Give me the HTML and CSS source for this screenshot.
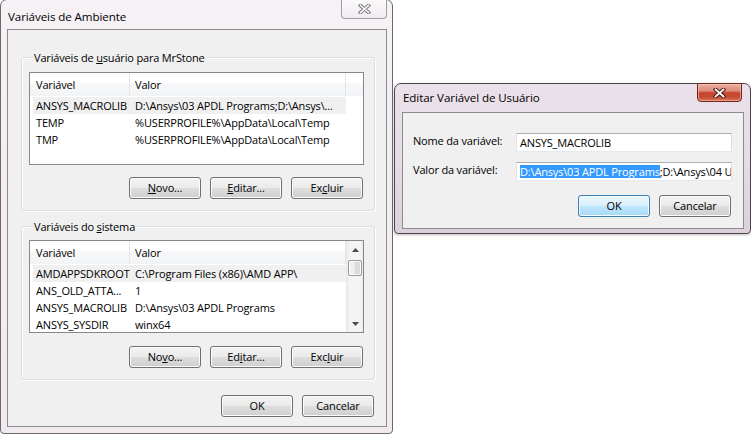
FILE: index.html
```html
<!DOCTYPE html>
<html lang="pt">
<head>
<meta charset="utf-8">
<title>Variáveis de Ambiente</title>
<link rel="stylesheet" href="styles.css">
</head>
<body>
<div class="desktop">

  <div class="win win-main">
    <div class="titlebar">
      <span class="title">Variáveis de Ambiente</span>
      <span class="close close-inactive">
        <svg width="13" height="10" viewBox="0 0 13 10"><path d="M2.5 1.5 L10.5 8.5 M10.5 1.5 L2.5 8.5" stroke="#7c7c7c" stroke-width="3.6" stroke-linecap="square" fill="none"/><path d="M2.5 1.5 L10.5 8.5 M10.5 1.5 L2.5 8.5" stroke="#fbfbfb" stroke-width="1.6" stroke-linecap="square" fill="none"/></svg>
      </span>
    </div>
    <div class="client">
      <div class="group g1">
        <span class="glabel">Variáveis de <u>u</u>suário para MrStone</span>
        <div class="list">
          <div class="lmain">
            <div class="lhead"><span class="hc hc1">Variável</span><span class="hc hc2">Valor</span><span class="hc hc3"></span></div>
            <div class="rows">
              <div class="row sel"><span class="c1">ANSYS_MACROLIB</span><span class="c2">D:\Ansys\03 APDL Programs;D:\Ansys\...</span></div>
              <div class="row"><span class="c1">TEMP</span><span class="c2">%USERPROFILE%\AppData\Local\Temp</span></div>
              <div class="row"><span class="c1">TMP</span><span class="c2">%USERPROFILE%\AppData\Local\Temp</span></div>
            </div>
          </div>
        </div>
        <div class="btnrow">
          <span class="btn"><u>N</u>ovo...</span>
          <span class="btn"><u>E</u>ditar...</span>
          <span class="btn">Ex<u>c</u>luir</span>
        </div>
      </div>

      <div class="group g2">
        <span class="glabel">Variáveis do <u>s</u>istema</span>
        <div class="list">
          <div class="lmain">
            <div class="lhead"><span class="hc hc1">Variável</span><span class="hc hc2">Valor</span></div>
            <div class="rows">
              <div class="row sel"><span class="c1">AMDAPPSDKROOT</span><span class="c2">C:\Program Files (x86)\AMD APP\</span></div>
              <div class="row"><span class="c1">ANS_OLD_ATTA...</span><span class="c2">1</span></div>
              <div class="row"><span class="c1">ANSYS_MACROLIB</span><span class="c2">D:\Ansys\03 APDL Programs</span></div>
              <div class="row"><span class="c1">ANSYS_SYSDIR</span><span class="c2">winx64</span></div>
            </div>
          </div>
          <div class="vscroll">
            <span class="sbtn"><svg width="7" height="4" viewBox="0 0 7 4"><path d="M0 4 L3.5 0 L7 4 Z" fill="#4a4a4a"/></svg></span>
            <span class="thumb"></span>
            <span class="track"></span>
            <span class="sbtn"><svg width="7" height="4" viewBox="0 0 7 4"><path d="M0 0 L7 0 L3.5 4 Z" fill="#4a4a4a"/></svg></span>
          </div>
        </div>
        <div class="btnrow">
          <span class="btn">No<u>v</u>o...</span>
          <span class="btn">Ed<u>i</u>tar...</span>
          <span class="btn">Exc<u>l</u>uir</span>
        </div>
      </div>

      <div class="btnrow okrow">
        <span class="btn">OK</span>
        <span class="btn">Cancelar</span>
      </div>
    </div>
  </div>

  <div class="win win-edit">
    <div class="titlebar">
      <span class="title">Editar Variável de Usuário</span>
      <span class="close close-active">
        <svg width="13" height="10" viewBox="0 0 13 10"><path d="M2.5 1.5 L10.5 8.5 M10.5 1.5 L2.5 8.5" stroke="#4a1c14" stroke-width="3.8" stroke-linecap="square" fill="none"/><path d="M2.5 1.5 L10.5 8.5 M10.5 1.5 L2.5 8.5" stroke="#ffffff" stroke-width="1.8" stroke-linecap="square" fill="none"/></svg>
      </span>
    </div>
    <div class="client client-edit">
      <div class="field">
        <span class="flabel">Nome da variável:</span>
        <span class="input">ANSYS_MACROLIB</span>
      </div>
      <div class="field f2">
        <span class="flabel">Valor da variável:</span>
        <span class="input"><span class="selected">D:\Ansys\03 APDL Programs</span>;D:\Ansys\04 U</span>
      </div>
      <div class="btnrow editbtns">
        <span class="btn btn-default">OK</span>
        <span class="btn">Cancelar</span>
      </div>
    </div>
  </div>

</div>
</body>
</html>
```

FILE: styles.css
```css
* { box-sizing: border-box; }
html, body { margin: 0; padding: 0; }
body {
  width: 751px;
  height: 436px;
  overflow: hidden;
  background: #ffffff;
  font-family: "Open Sans", "Noto Sans", sans-serif;
  font-size: 11px;
  letter-spacing: -0.17px;
  color: #000;
}
u { text-decoration: underline; text-underline-offset: 1px; }

.desktop { position: relative; width: 751px; height: 436px; overflow: hidden; }

/* windows on the desktop */
.win {
  position: absolute;
  display: flex;
  flex-direction: column;
  border: 1px solid #6d676d;
  border-radius: 7px 7px 4px 4px;
}
.win-main {
  left: 0;
  top: -1px;
  width: 393px;
  height: 435px;
  padding: 0 5px 6px 6px;
  background: linear-gradient(180deg, #f6f1f5 0%, #f3eef2 40%, #f1ebf0 100%);
}
.win-edit {
  left: 394px;
  top: 83px;
  width: 357px;
  height: 151px;
  padding: 0 6px 4px 7px;
  border-color: #4b454b;
  background: linear-gradient(180deg, #ebe1ea 0%, #e6dbe6 50%, #ddd0dd 100%);
  box-shadow: 0 1px 3px rgba(0,0,0,0.25);
}

.titlebar {
  display: flex;
  justify-content: space-between;
  align-items: flex-start;
  flex: none;
}
.win-main .titlebar { height: 29px; }
.win-edit .titlebar { height: 28px; }
.title {
  font-size: 11.6px;
  letter-spacing: -0.1px;
  line-height: 16px;
  padding-left: 1px;
  white-space: nowrap;
}
.win-main .title { padding-top: 9px; }
.win-edit .title { padding-top: 6px; }

.close {
  display: flex;
  align-items: center;
  justify-content: center;
  height: 19px;
  border-radius: 0 0 4px 4px;
}
.close-inactive {
  width: 46px;
  margin-top: 0;
  border: 1px solid #a39ea5;
  border-top: none;
  background: linear-gradient(180deg, rgba(255,255,255,0.55), rgba(235,230,236,0.5));
}
.close-active {
  width: 45px;
  margin-top: -1px;
  margin-right: 2px;
  border: 1px solid #6b2a20;
  background: linear-gradient(180deg, #eab0a2 0%, #df8b78 40%, #c8452d 52%, #c54a33 75%, #d77458 100%);
  box-shadow: inset 0 0 0 1px rgba(255,210,200,0.5);
}

/* client area */
.client {
  flex: none;
  display: flex;
  flex-direction: column;
  background: #f0f0f0;
  border: 1px solid #8e8a8f;
}
.win-main .client {
  height: 398px;
  padding: 0 12px 9px 0;
}

/* group boxes */
.group {
  display: flex;
  flex-direction: column;
  border: 1px solid #d5dfe5;
  border-radius: 3px;
  box-shadow: inset 1px 1px 0 #fff, 1px 1px 0 #fff;
  margin-left: 13px;
  margin-right: -1px;
  padding: 0 10px 11px 7px;
}
.g1 { margin-top: 27px; }
.g2 { margin-top: 15px; }
.glabel {
  align-self: flex-start;
  height: 15px;
  line-height: 15px;
  margin-top: -8px;
  margin-left: 4px;
  padding: 0 2px 0 1px;
  background: #f0f0f0;
  white-space: nowrap;
}

/* list views */
.list {
  display: flex;
  height: 93px;
  margin-top: 7px;
  background: #fff;
  border: 1px solid #828790;
  overflow: hidden;
}
.g2 .list { margin-top: 6px; }
.lmain { flex: 1; display: flex; flex-direction: column; min-width: 0; }
.lhead {
  display: flex;
  height: 23px;
  flex: none;
  background: linear-gradient(180deg, #ffffff 0%, #ffffff 45%, #f7f8f9 45%, #f2f3f5 100%);
}
.hc {
  line-height: 23px;
  border-right: 1px solid #e3e4e6;
  white-space: nowrap;
}
.hc1 { width: 100px; padding-left: 6px; }
.hc2 { width: 216px; padding-left: 5px; }
.hc3 { flex: 1; border-right: none; }
.rows { display: flex; flex-direction: column; margin-top: 1px; }
.row {
  display: flex;
  width: 313px;
  height: 17px;
  margin-left: 3px;
  line-height: 18px;
  white-space: nowrap;
  flex: none;
}
.row.sel { background: #f0f0f0; }
.c1 { width: 102px; padding-left: 3px; flex: none; overflow: hidden; }
.c2 { flex: 1; overflow: hidden; }

/* scrollbar */
.vscroll {
  width: 17px;
  flex: none;
  display: flex;
  flex-direction: column;
  background: linear-gradient(90deg, #e8e8e8 0%, #f4f4f4 15%, #f4f4f4 85%, #e8e8e8 100%);
  border-left: 1px solid #ebebeb;
}
.sbtn {
  height: 17px;
  flex: none;
  display: flex;
  align-items: center;
  justify-content: center;
}
.thumb {
  height: 16px;
  margin: 2px 1px 0 1px;
  flex: none;
  border: 1px solid #9a9a9a;
  border-radius: 2px;
  background: linear-gradient(90deg, #f4f4f4 0%, #eaeaea 50%, #d9d9d9 51%, #dcdcdc 100%);
  box-shadow: inset 0 0 0 1px #fbfbfb;
}
.track { flex: 1; }

/* buttons */
.btnrow {
  display: flex;
  justify-content: flex-end;
  gap: 9px;
  margin-top: 12px;
  padding-right: 1px;
}
.g2 .btnrow { margin-top: 13px; }
.okrow { margin-top: 15px; padding-right: 0; }
.btn {
  width: 72px;
  height: 22px;
  display: flex;
  align-items: center;
  justify-content: center;
  line-height: 16px;
  border: 1px solid #707070;
  border-radius: 3px;
  background: linear-gradient(180deg, #f2f2f2 0%, #ebebeb 48%, #dddddd 52%, #cfcfcf 100%);
  box-shadow: inset 0 0 0 1px #fcfcfc;
  white-space: nowrap;
}
.btn-default {
  border-color: #3c7fb1;
  background: linear-gradient(180deg, #eaf6fd 0%, #d9f0fc 48%, #bee6fd 52%, #a7d9f5 100%);
  box-shadow: inset 0 0 0 1px #f0faff;
}

/* edit dialog */
.client-edit {
  height: 117px;
  padding: 20px 12px 11px 10px;
}
.field { display: flex; align-items: flex-start; }
.f2 { margin-top: 10px; }
.flabel {
  width: 103px;
  flex: none;
  line-height: 16px;
  white-space: nowrap;
}
.input {
  width: 216px;
  height: 19px;
  margin-right: -1px;
  display: block;
  line-height: 17px;
  padding-left: 3px;
  background: #fff;
  border: 1px solid;
  border-color: #abadb3 #dbdfe6 #e3e9ef #e2e3ea;
  white-space: nowrap;
  overflow: hidden;
}
.selected {
  display: inline-block;
  height: 13px;
  line-height: 13px;
  background: #3399ff;
  color: #fff;
}
.editbtns { margin-top: 14px; padding-right: 0; }
```
